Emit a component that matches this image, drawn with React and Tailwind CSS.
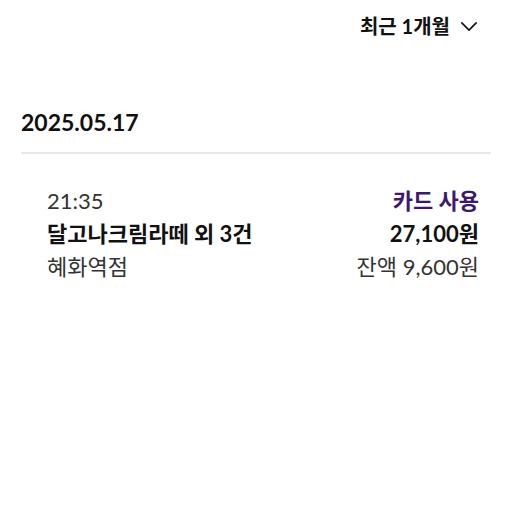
import React from "react";

const font = { fontFamily: 'Lato, "Noto Sans CJK KR", sans-serif' };

const ChevronDown = ({ className = "" }) => (
  <svg className={className} viewBox="0 0 20 12" fill="none" stroke="currentColor" strokeWidth="1.8" strokeLinecap="round" strokeLinejoin="round">
    <path d="M2 2l8 8 8-8" />
  </svg>
);

const HistoryItem = ({ time, title, store, type, amount, balance }) => (
  <div className="flex justify-between pl-[26px] pr-[12px] pt-[30px] pb-[24px]">
    <div className="flex flex-col">
      <span className="text-[22px] leading-[33px] text-[#333]">{time}</span>
      <span className="text-[22px] leading-[33px] font-bold text-[#111]">{title}</span>
      <span className="text-[22px] leading-[33px] text-[#333]">{store}</span>
    </div>
    <div className="flex flex-col items-end">
      <span className="text-[22px] leading-[33px] font-bold text-[#3b1a6b]">{type}</span>
      <span className="text-[22px] leading-[33px] font-bold text-[#111]">{amount}</span>
      <span className="text-[22px] leading-[33px] text-[#333]">{balance}</span>
    </div>
  </div>
);

export default function App() {
  return (
    <div className="w-[512px] h-[512px] bg-white" style={font}>
      <div className="flex justify-end items-center gap-[10px] pt-[14px] pr-[34px]">
        <span className="text-[20px] leading-[24px] font-bold text-[#111]">최근 1개월</span>
        <ChevronDown className="w-[18px] h-[11px] text-[#111]" />
      </div>

      <div className="px-[21px] pt-[69px]">
        <div className="text-[23px] leading-[30px] font-bold text-[#111] pb-[15px] border-b-2 border-[#e8e8e8]">
          2025.05.17
        </div>
        <HistoryItem
          time="21:35"
          title="달고나크림라떼 외 3건"
          store="혜화역점"
          type="카드 사용"
          amount="27,100원"
          balance="잔액 9,600원"
        />
      </div>
    </div>
  );
}
